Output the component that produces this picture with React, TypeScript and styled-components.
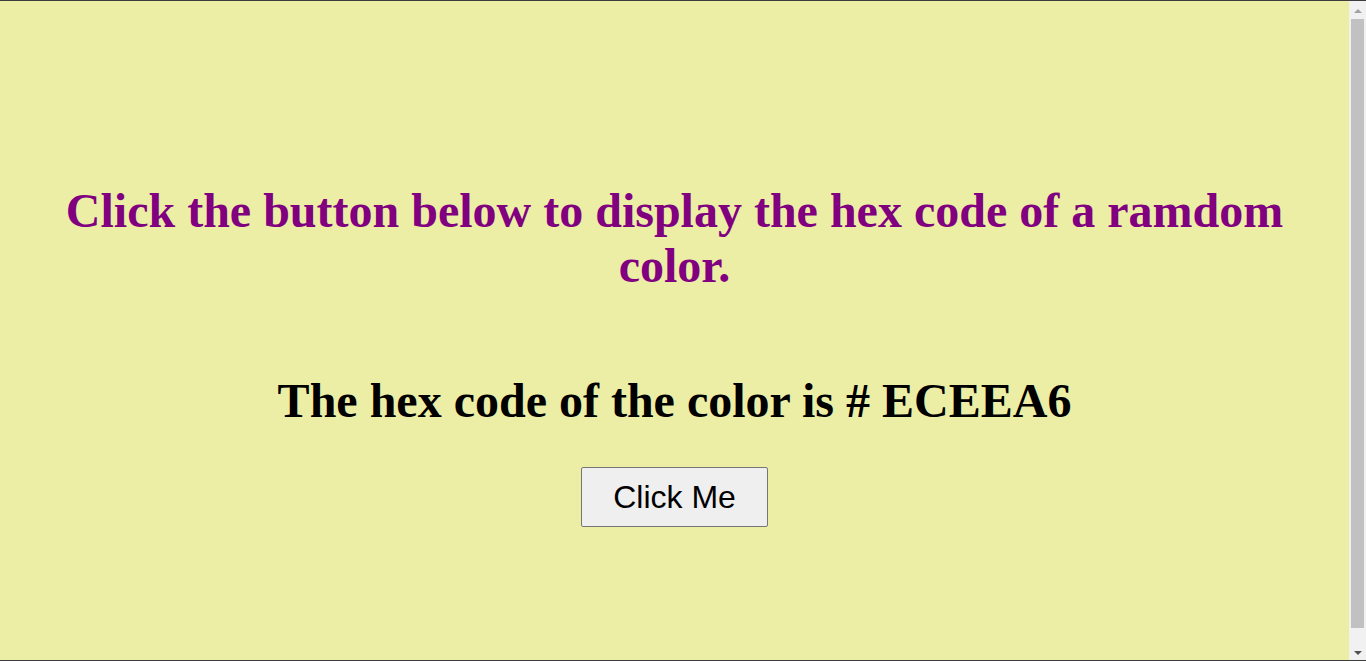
import React, { useState } from "react";
import styled, { createGlobalStyle } from "styled-components";

const GlobalStyle = createGlobalStyle`
  html, body {
    background: #eceea6;
  }
  body {
    margin: 8px 25px 8px 8px;
    min-height: 100vh;
    font-family: "Liberation Serif", "Times New Roman", serif;
  }
`;

const FrameEdge = styled.div<{ $side: "top" | "bottom" }>`
  position: fixed;
  left: 0;
  right: 0;
  ${(p) => (p.$side === "top" ? "top: 0;" : "bottom: 0;")}
  height: 1px;
  background: #3c3c3c;
  pointer-events: none;
  z-index: 10;
`;

/* drawn scrollbar, since the headless window shows none */
const ScrollBar = styled.div`
  position: fixed;
  top: 0;
  right: 0;
  bottom: 0;
  width: 17px;
  background: #f1f1f1;
  display: flex;
  flex-direction: column;
  z-index: 5;
`;

const Arrow = styled.div<{ $dir: "up" | "down"; $color: string }>`
  height: 17px;
  flex: none;
  display: flex;
  align-items: center;
  justify-content: center;
  &::before {
    content: "";
    width: 0;
    height: 0;
    border-left: 4px solid transparent;
    border-right: 4px solid transparent;
    ${(p) =>
      p.$dir === "up"
        ? `border-bottom: 4px solid ${p.$color}; margin-top: 5px;`
        : `border-top: 4px solid ${p.$color}; margin-bottom: -1px;`}
  }
`;

const Track = styled.div`
  flex: 1;
  padding: 2px 2px 0;
`;

const Thumb = styled.div`
  height: 609px;
  background: #c1c1c1;
`;

const Page = styled.main`
  display: flex;
  flex-direction: column;
  align-items: center;
  text-align: center;
  padding-top: 175px;
`;

const Prompt = styled.h1`
  margin: 0 0 80px;
  font-size: 48px;
  line-height: 55px;
  font-weight: bold;
  color: #800080;
`;

const HexLine = styled.h2`
  margin: 0 0 39px;
  font-size: 48px;
  line-height: 55px;
  font-weight: bold;
  color: #000;
`;

const Button = styled.button`
  font-family: "Liberation Sans", Arial, sans-serif;
  font-size: 32px;
  line-height: 36px;
  padding: 11px 31px;
  color: #000;
  background: #efefef;
  border: 1px solid #767676;
  border-radius: 2px;
  cursor: pointer;
  &:hover {
    background: #e5e5e5;
  }
`;

function randomHex() {
  return Math.floor(Math.random() * 0xffffff)
    .toString(16)
    .toUpperCase()
    .padStart(6, "0");
}

export default function App() {
  const [hex, setHex] = useState("ECEEA6");

  const onClick = () => {
    const next = randomHex();
    setHex(next);
    document.body.style.background = `#${next}`;
  };

  return (
    <>
      <GlobalStyle />
      <FrameEdge $side="top" />
      <Page>
        <Prompt>Click the button below to display the hex code of a ramdom color.</Prompt>
        <HexLine>The hex code of the color is # {hex}</HexLine>
        <Button onClick={onClick}>Click Me</Button>
      </Page>
      <ScrollBar>
        <Arrow $dir="up" $color="#a3a3a3" />
        <Track>
          <Thumb />
        </Track>
        <Arrow $dir="down" $color="#505050" />
      </ScrollBar>
      <FrameEdge $side="bottom" />
    </>
  );
}
